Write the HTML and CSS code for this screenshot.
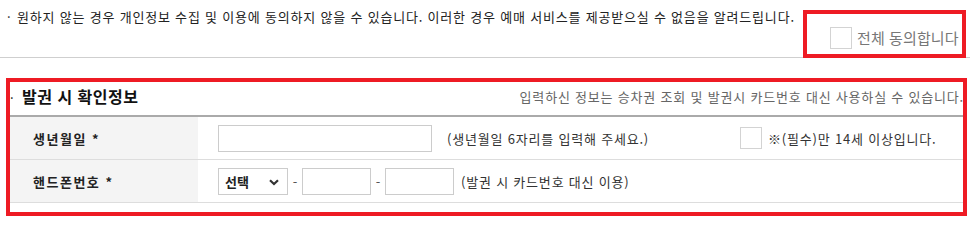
FILE: index.html
```html
<!DOCTYPE html>
<html lang="ko">
<head>
<meta charset="utf-8">
<title>발권 시 확인정보</title>
<link rel="stylesheet" href="styles.css">
</head>
<body>
<div class="notice">
  <p class="notice-text"><span class="dot">·</span>원하지 않는 경우 개인정보 수집 및 이용에 동의하지 않을 수 있습니다. 이러한 경우 예매 서비스를 제공받으실 수 없음을 알려드립니다.</p>
  <label class="agree-all"><span class="chk"></span><span class="agree-label">전체 동의합니다</span></label>
</div>
<section class="confirm">
  <div class="confirm-head">
    <h2 class="confirm-title"><span class="dot dot-title">·</span>발권 시 확인정보</h2>
    <p class="confirm-desc">입력하신 정보는 승차권 조회 및 발권시 카드번호 대신 사용하실 수 있습니다.</p>
  </div>
  <div class="row">
    <div class="label">생년월일 *</div>
    <div class="field">
      <input class="txt birth" type="text">
      <span class="hint hint-birth">(생년월일 6자리를 입력해 주세요.)</span>
      <span class="chk"></span>
      <span class="age">※(필수)만 14세 이상입니다.</span>
    </div>
  </div>
  <div class="row">
    <div class="label">핸드폰번호 *</div>
    <div class="field">
      <div class="select-wrap">
        <select class="sel"><option>선택</option><option>010</option><option>011</option></select>
        <svg class="chev" width="10" height="7" viewBox="0 0 10 7"><path d="M1 1.2 L5 5 L9 1.2" fill="none" stroke="#333" stroke-width="2.2"/></svg>
      </div>
      <span class="dash">-</span>
      <input class="txt phone" type="text">
      <span class="dash">-</span>
      <input class="txt phone" type="text">
      <span class="hint hint-phone">(발권 시 카드번호 대신 이용)</span>
    </div>
  </div>
</section>
</body>
</html>
```
FILE: styles.css
```css
body {
  margin: 0;
  background: #fff;
  color: #222;
  font-family: "Noto Sans CJK KR", "Noto Sans", sans-serif;
}

.notice {
  display: flex;
  justify-content: space-between;
  align-items: flex-start;
  height: 57px;
  border-bottom: 1px solid #cfcfcf;
}

.notice-text {
  margin: 9px 0 0 7px;
  font-size: 13px;
  line-height: 16px;
  letter-spacing: 0.8px;
  white-space: nowrap;
}

.dot {
  display: inline-block;
  width: 10px;
  letter-spacing: 0;
}

.dot-title {
  width: 12px;
  font-size: 13px;
  font-weight: normal;
}

.agree-all {
  display: flex;
  align-items: center;
  box-sizing: border-box;
  width: 163px;
  height: 48px;
  margin: 10px 4px 0 0;
  padding: 7px 0 0 23px;
  border: 4px solid #ee1b24;
}

.chk {
  flex: none;
  display: block;
  width: 22px;
  height: 22px;
  box-sizing: border-box;
  border: 1px solid #d3d3d3;
  background: #fff;
}

.agree-label {
  margin-left: 5px;
  font-size: 15px;
  line-height: 22px;
  letter-spacing: 0.1px;
  color: #777;
  white-space: nowrap;
}

.confirm {
  margin: 20px 3px 0 6px;
  padding-bottom: 9px;
  border: 4px solid #ee1b24;
}

.confirm-head {
  display: flex;
  justify-content: space-between;
  align-items: center;
  box-sizing: border-box;
  height: 35px;
  padding-bottom: 3px;
  border-bottom: 2px solid #aaa;
}

.confirm-title {
  margin: 0;
  font-size: 16px;
  font-weight: bold;
  line-height: 20px;
  letter-spacing: 0.5px;
  color: #111;
  white-space: nowrap;
}

.confirm-desc {
  margin: 0 -1px 0 0;
  font-size: 13px;
  line-height: 16px;
  letter-spacing: 0.8px;
  color: #666;
  white-space: nowrap;
}

.row {
  display: flex;
  height: 42px;
  border-bottom: 1px solid #ddd;
}

.label {
  flex: none;
  display: flex;
  align-items: center;
  box-sizing: border-box;
  width: 188px;
  padding-left: 23px;
  background: #f4f4f4;
  font-size: 13px;
  font-weight: bold;
  letter-spacing: 1.5px;
  color: #222;
  white-space: nowrap;
}

.field {
  flex: 1;
  display: flex;
  align-items: center;
  padding-left: 20px;
  font-size: 13px;
  letter-spacing: 0.8px;
  color: #333;
  white-space: nowrap;
}

.txt {
  flex: none;
  box-sizing: border-box;
  height: 27px;
  margin: 0;
  padding: 0 4px;
  border: 1px solid #ccc;
  background: #fff;
}

.birth {
  width: 214px;
}

.phone {
  width: 69px;
}

.hint-birth {
  flex: none;
  width: 293px;
  margin-left: 15px;
}

.age {
  margin-left: 6px;
}

.select-wrap {
  position: relative;
  flex: none;
  width: 70px;
  height: 27px;
}

.sel {
  -webkit-appearance: none;
  appearance: none;
  box-sizing: border-box;
  width: 100%;
  height: 100%;
  margin: 0;
  padding: 0 0 0 6px;
  border: 1px solid #ccc;
  border-radius: 0;
  background: #fff;
  font-family: inherit;
  font-size: 13px;
  font-weight: bold;
  color: #222;
}

.chev {
  position: absolute;
  right: 9px;
  top: 11px;
  pointer-events: none;
}

.dash {
  flex: none;
  width: 14px;
  text-align: center;
  letter-spacing: 0;
  color: #555;
}

.hint-phone {
  margin-left: 7px;
}
```
